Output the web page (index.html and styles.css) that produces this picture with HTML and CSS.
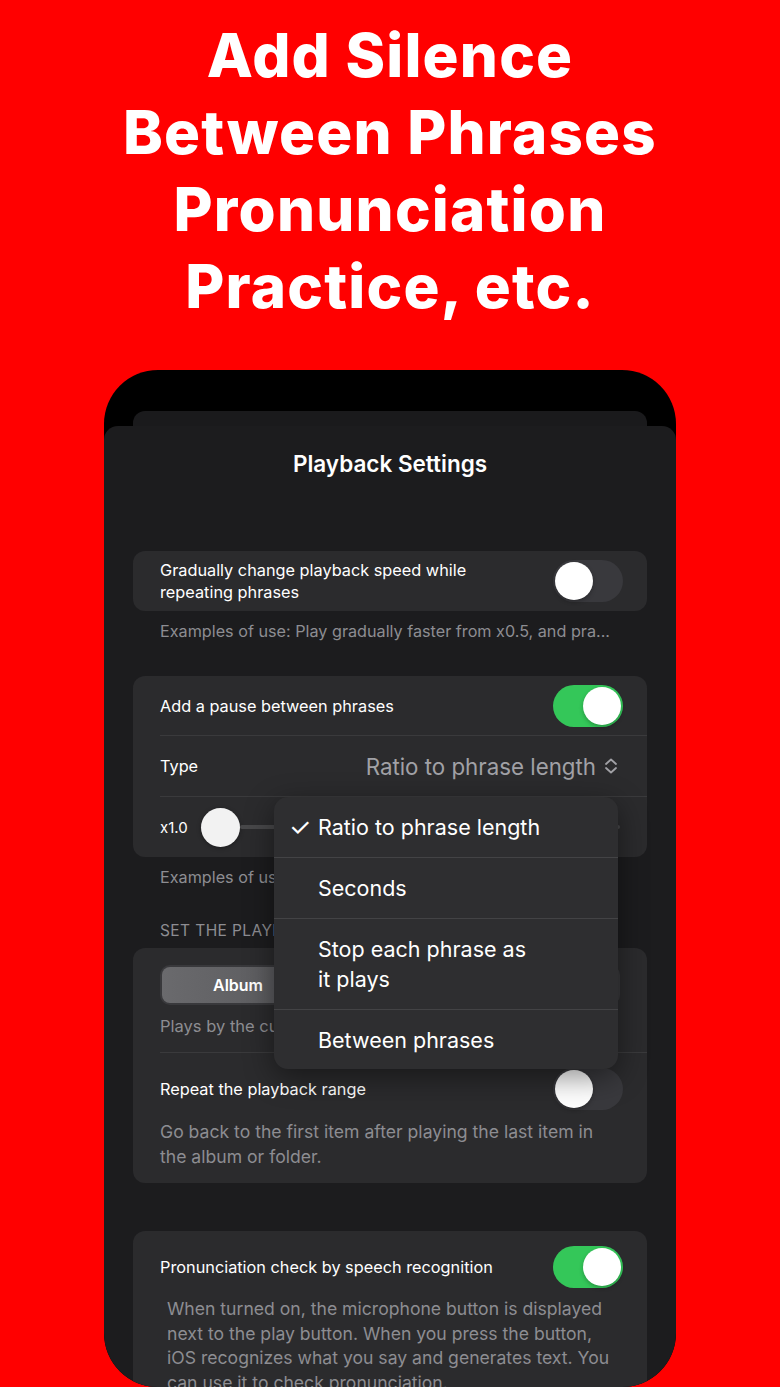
FILE: index.html
```html
<!DOCTYPE html>
<html lang="en">
<head>
    <meta charset="UTF-8">
    <meta name="viewport" content="width=device-width, initial-scale=1.0">
    <title>Playback Settings</title>
    <link rel="stylesheet" href="styles.css">
</head>
<body>
    <h1 class="headline">Add Silence<br>Between Phrases<br>Pronunciation<br>Practice, etc.</h1>

    <div class="phone">
        <div class="back-card"></div>
        <div class="sheet">
            <h2 class="sheet-title">Playback Settings</h2>

            <div class="group group-speed">
                <div class="row">
                    <span class="row-label">Gradually change playback speed while<br>repeating phrases</span>
                    <span class="toggle"><span class="knob"></span></span>
                </div>
            </div>
            <p class="footer">Examples of use: Play gradually faster from x0.5, and pra...</p>

            <div class="group group-pause">
                <div class="row row-sep">
                    <span class="row-label">Add a pause between phrases</span>
                    <span class="toggle on"><span class="knob"></span></span>
                </div>
                <div class="row row-sep">
                    <span class="row-label">Type</span>
                    <span class="picker">Ratio to phrase length
                        <svg class="chevrons" viewBox="0 0 16 18" width="16" height="18">
                            <path d="M3 7 L8 2.5 L13 7 M3 11 L8 15.5 L13 11" fill="none" stroke="#a1a1a6" stroke-width="1.8" stroke-linecap="round" stroke-linejoin="round"/>
                        </svg>
                    </span>
                </div>
                <div class="row">
                    <span class="slider-label">x1.0</span>
                    <div class="slider">
                        <span class="slider-knob"></span>
                        <span class="slider-track"></span>
                    </div>
                </div>
            </div>
            <p class="footer">Examples of use: Insert a pause after each phrase</p>

            <p class="section-header">SET THE PLAYBACK RANGE</p>
            <div class="group group-range">
                <div class="segmented">
                    <span class="segment selected">Album</span>
                    <span class="segment">Folder</span>
                    <span class="segment">All</span>
                </div>
                <p class="inner-note">Plays by the current album.</p>
                <div class="row row-repeat">
                    <span class="row-label">Repeat the playback range</span>
                    <span class="toggle"><span class="knob"></span></span>
                </div>
                <p class="inner-desc">Go back to the first item after playing the last item in<br>the album or folder.</p>
            </div>

            <div class="group group-speech">
                <div class="row row-speech">
                    <span class="row-label">Pronunciation check by speech recognition</span>
                    <span class="toggle on"><span class="knob"></span></span>
                </div>
                <p class="speech-desc">When turned on, the microphone button is displayed<br>next to the play button. When you press the button,<br>iOS recognizes what you say and generates text. You<br>can use it to check pronunciation.</p>
            </div>

            <!-- open picker menu -->
            <div class="menu">
                <div class="menu-item"><span class="check">✓</span>Ratio to phrase length</div>
                <div class="menu-item">Seconds</div>
                <div class="menu-item tall">Stop each phrase as<br>it plays</div>
                <div class="menu-item">Between phrases</div>
            </div>
        </div>
    </div>
</body>
</html>
```

FILE: styles.css
```css
body {
    margin: 0;
    width: 780px;
    height: 1387px;
    overflow: hidden;
    background-color: #ff0000;
    font-family: Inter, "Noto Sans", sans-serif;
}
.headline {
    margin: 17px 0 0;
    color: white;
    font-size: 60px;
    font-weight: 800;
    line-height: 77px;
    text-align: center;
    letter-spacing: 1.2px;
}
.phone {
    margin: 45px 0 0 104px;
    width: 572px;
    height: 1017px;
    background: #000;
    border-radius: 54px;
    overflow: hidden;
    padding-top: 41px;
    box-sizing: border-box;
}
.back-card {
    margin: 0 29px;
    height: 15px;
    background: #1a1a1c;
    border-radius: 12px 12px 0 0;
}
.sheet {
    position: relative;
    height: 961px;
    background: #1c1c1e;
    border-radius: 14px 14px 0 0;
    padding: 0 29px;
}
.sheet-title {
    margin: 0;
    padding-top: 25px;
    height: 26px;
    line-height: 26px;
    color: white;
    font-size: 22.5px;
    font-weight: 600;
    text-align: center;
}
.group {
    background: #2b2b2d;
    border-radius: 12px;
}
.row {
    display: flex;
    align-items: center;
    justify-content: space-between;
    margin-left: 27px;
    padding-right: 24px;
    color: white;
    font-size: 16.3px;
}
.row-label {
    line-height: 22px;
}
.row-sep {
    border-bottom: 1px solid #3a3a3c;
}
.group-speed {
    margin-top: 74px;
}
.group-speed .row {
    height: 60px;
}
.footer {
    margin: 0;
    padding: 10px 0 0 27px;
    height: 55px;
    color: #8d8d92;
    font-size: 16.2px;
    line-height: 20px;
    white-space: nowrap;
}
.group-pause .row {
    height: 60px;
}
.group-pause .row:first-child {
    height: 59px;
}
.toggle {
    position: relative;
    width: 70px;
    height: 42px;
    border-radius: 21px;
    background: #39393d;
    flex-shrink: 0;
}
.toggle .knob {
    position: absolute;
    top: 2px;
    left: 2px;
    width: 38px;
    height: 38px;
    border-radius: 50%;
    background: white;
    box-shadow: 0 2px 4px rgba(0, 0, 0, 0.25);
}
.toggle.on {
    background: #34c759;
}
.toggle.on .knob {
    left: 30px;
}
.picker {
    display: flex;
    align-items: center;
    gap: 7px;
    margin-right: 4px;
    color: #a1a1a6;
    font-size: 22.3px;
}
.slider-label {
    font-size: 15px;
    width: 41px;
}
.slider {
    flex: 1;
    display: flex;
    align-items: center;
    margin-right: 3px;
}
.slider-knob {
    width: 39px;
    height: 39px;
    border-radius: 50%;
    background: #f2f2f2;
    box-shadow: 0 1px 4px rgba(0, 0, 0, 0.35);
    flex-shrink: 0;
}
.slider-track {
    flex: 1;
    height: 4px;
    background: #48484a;
    border-radius: 2px;
}
.section-header {
    margin: 0;
    padding-left: 27px;
    height: 17px;
    line-height: 17px;
    color: #8d8d92;
    font-size: 15.5px;
    letter-spacing: 0.4px;
}
.group-range {
    margin-top: 9px;
    padding-top: 17px;
    padding-bottom: 14px;
}
.segmented {
    display: flex;
    margin: 0 27px;
    height: 40px;
    padding: 2px;
    box-sizing: border-box;
    background: #39393c;
    border-radius: 10px;
}
.segment {
    flex: 1;
    display: flex;
    align-items: center;
    justify-content: center;
    color: white;
    font-size: 16px;
    font-weight: 600;
    border-radius: 8px;
}
.segment.selected {
    background: linear-gradient(90deg, #6a6a6d, #58585b);
}
.inner-note {
    margin: 0 0 0 27px;
    height: 47px;
    line-height: 42px;
    color: #8d8d92;
    font-size: 16.5px;
    border-bottom: 1px solid #3a3a3c;
}
.row-repeat {
    height: 72px;
}
.inner-desc {
    margin: -6px 0 0 27px;
    color: #8d8d92;
    font-size: 17.6px;
    line-height: 25px;
}
.group-speech {
    margin-top: 48px;
    padding-bottom: 20px;
}
.row-speech {
    height: 72px;
}
.speech-desc {
    margin: -6px 0 0 34px;
    color: #8d8d92;
    font-size: 17.6px;
    line-height: 24.5px;
    white-space: nowrap;
}
.menu {
    position: absolute;
    left: 170px;
    top: 371px;
    width: 344px;
    background: #2e2e30;
    border-radius: 14px;
    box-shadow: 0 8px 30px rgba(0, 0, 0, 0.45);
    overflow: hidden;
}
.menu-item {
    position: relative;
    display: flex;
    align-items: center;
    height: 60px;
    padding-left: 44px;
    color: white;
    font-size: 21.5px;
    line-height: 30px;
    border-bottom: 1px solid #434345;
}
.menu-item.tall {
    height: 90px;
}
.menu-item:last-child {
    height: 59px;
    border-bottom: none;
}
.check {
    position: absolute;
    left: 15px;
    font-size: 25px;
    font-weight: 400;
}
```
